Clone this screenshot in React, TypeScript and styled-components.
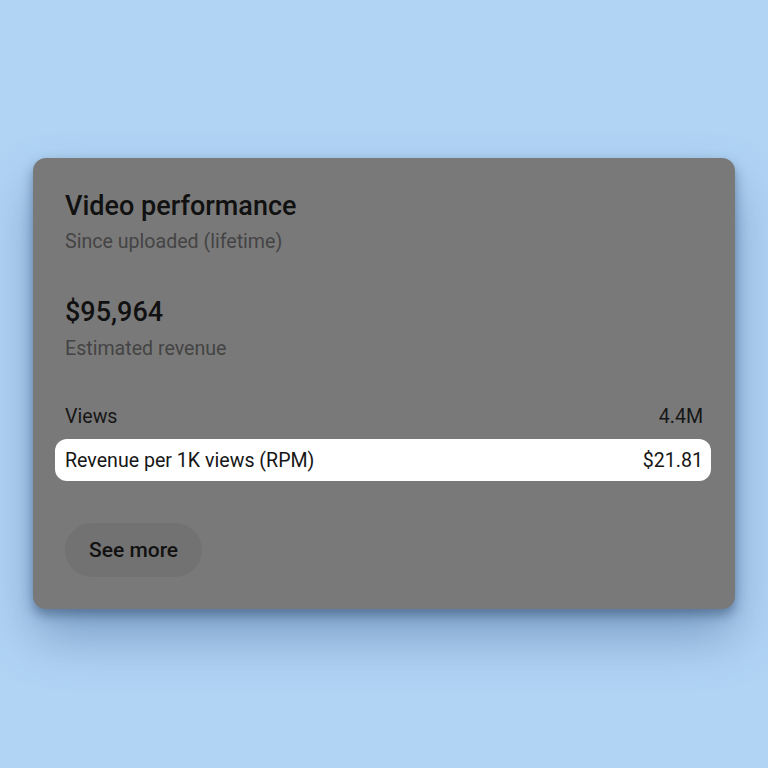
import React from "react";
import styled, { createGlobalStyle } from "styled-components";

const Global = createGlobalStyle`
  html, body { margin: 0; padding: 0; }
  body { background: #b1d4f5; font-family: Roboto, "Noto Sans", sans-serif; }
`;

const Page = styled.div`
  width: 768px;
  height: 768px;
  box-sizing: border-box;
  padding-top: 158px;
  padding-left: 33px;
`;

const Card = styled.div`
  width: 702px;
  height: 451px;
  box-sizing: border-box;
  background: #797979;
  border-radius: 13px;
  padding: 30px 32px 0 32px;
  box-shadow: 0 6px 12px rgba(50, 75, 110, 0.55), 0 28px 50px rgba(60, 95, 140, 0.45);
  display: flex;
  flex-direction: column;
`;

const Title = styled.div`
  font-size: 27px;
  font-weight: 500;
  color: #111;
  line-height: 36px;
`;

const Sub = styled.div<{ $gap: number }>`
  font-size: 19.6px;
  color: #444;
  line-height: 26px;
  margin-top: ${(p) => p.$gap}px;
`;

const Amount = styled.div`
  font-size: 27px;
  font-weight: 500;
  color: #111;
  line-height: 34px;
  margin-top: 40px;
`;

const Rows = styled.div`
  margin-top: 33px;
  display: flex;
  flex-direction: column;
  gap: 2px;
`;

const Row = styled.div<{ $hl?: boolean }>`
  display: flex;
  justify-content: space-between;
  align-items: center;
  font-size: 19.6px;
  color: #161616;
  height: 42px;
  margin: 0 -8px 0 -10px;
  padding: 0 8px 0 10px;
  border-radius: 12px;
  background: ${(p) => (p.$hl ? "#ffffff" : "transparent")};
`;

const Button = styled.button`
  align-self: flex-start;
  margin-top: 42px;
  height: 54px;
  padding: 0 24px;
  border: none;
  border-radius: 27px;
  background: #727272;
  font-family: Roboto, "Noto Sans", sans-serif;
  font-size: 21px;
  font-weight: 500;
  color: #111;
`;

export default function App() {
  return (
    <Page>
      <Global />
      <Card>
        <Title>Video performance</Title>
        <Sub $gap={5}>Since uploaded (lifetime)</Sub>
        <Amount>$95,964</Amount>
        <Sub $gap={7}>Estimated revenue</Sub>
        <Rows>
          <Row>
            <span>Views</span>
            <span>4.4M</span>
          </Row>
          <Row $hl>
            <span>Revenue per 1K views (RPM)</span>
            <span>$21.81</span>
          </Row>
        </Rows>
        <Button>See more</Button>
      </Card>
    </Page>
  );
}
